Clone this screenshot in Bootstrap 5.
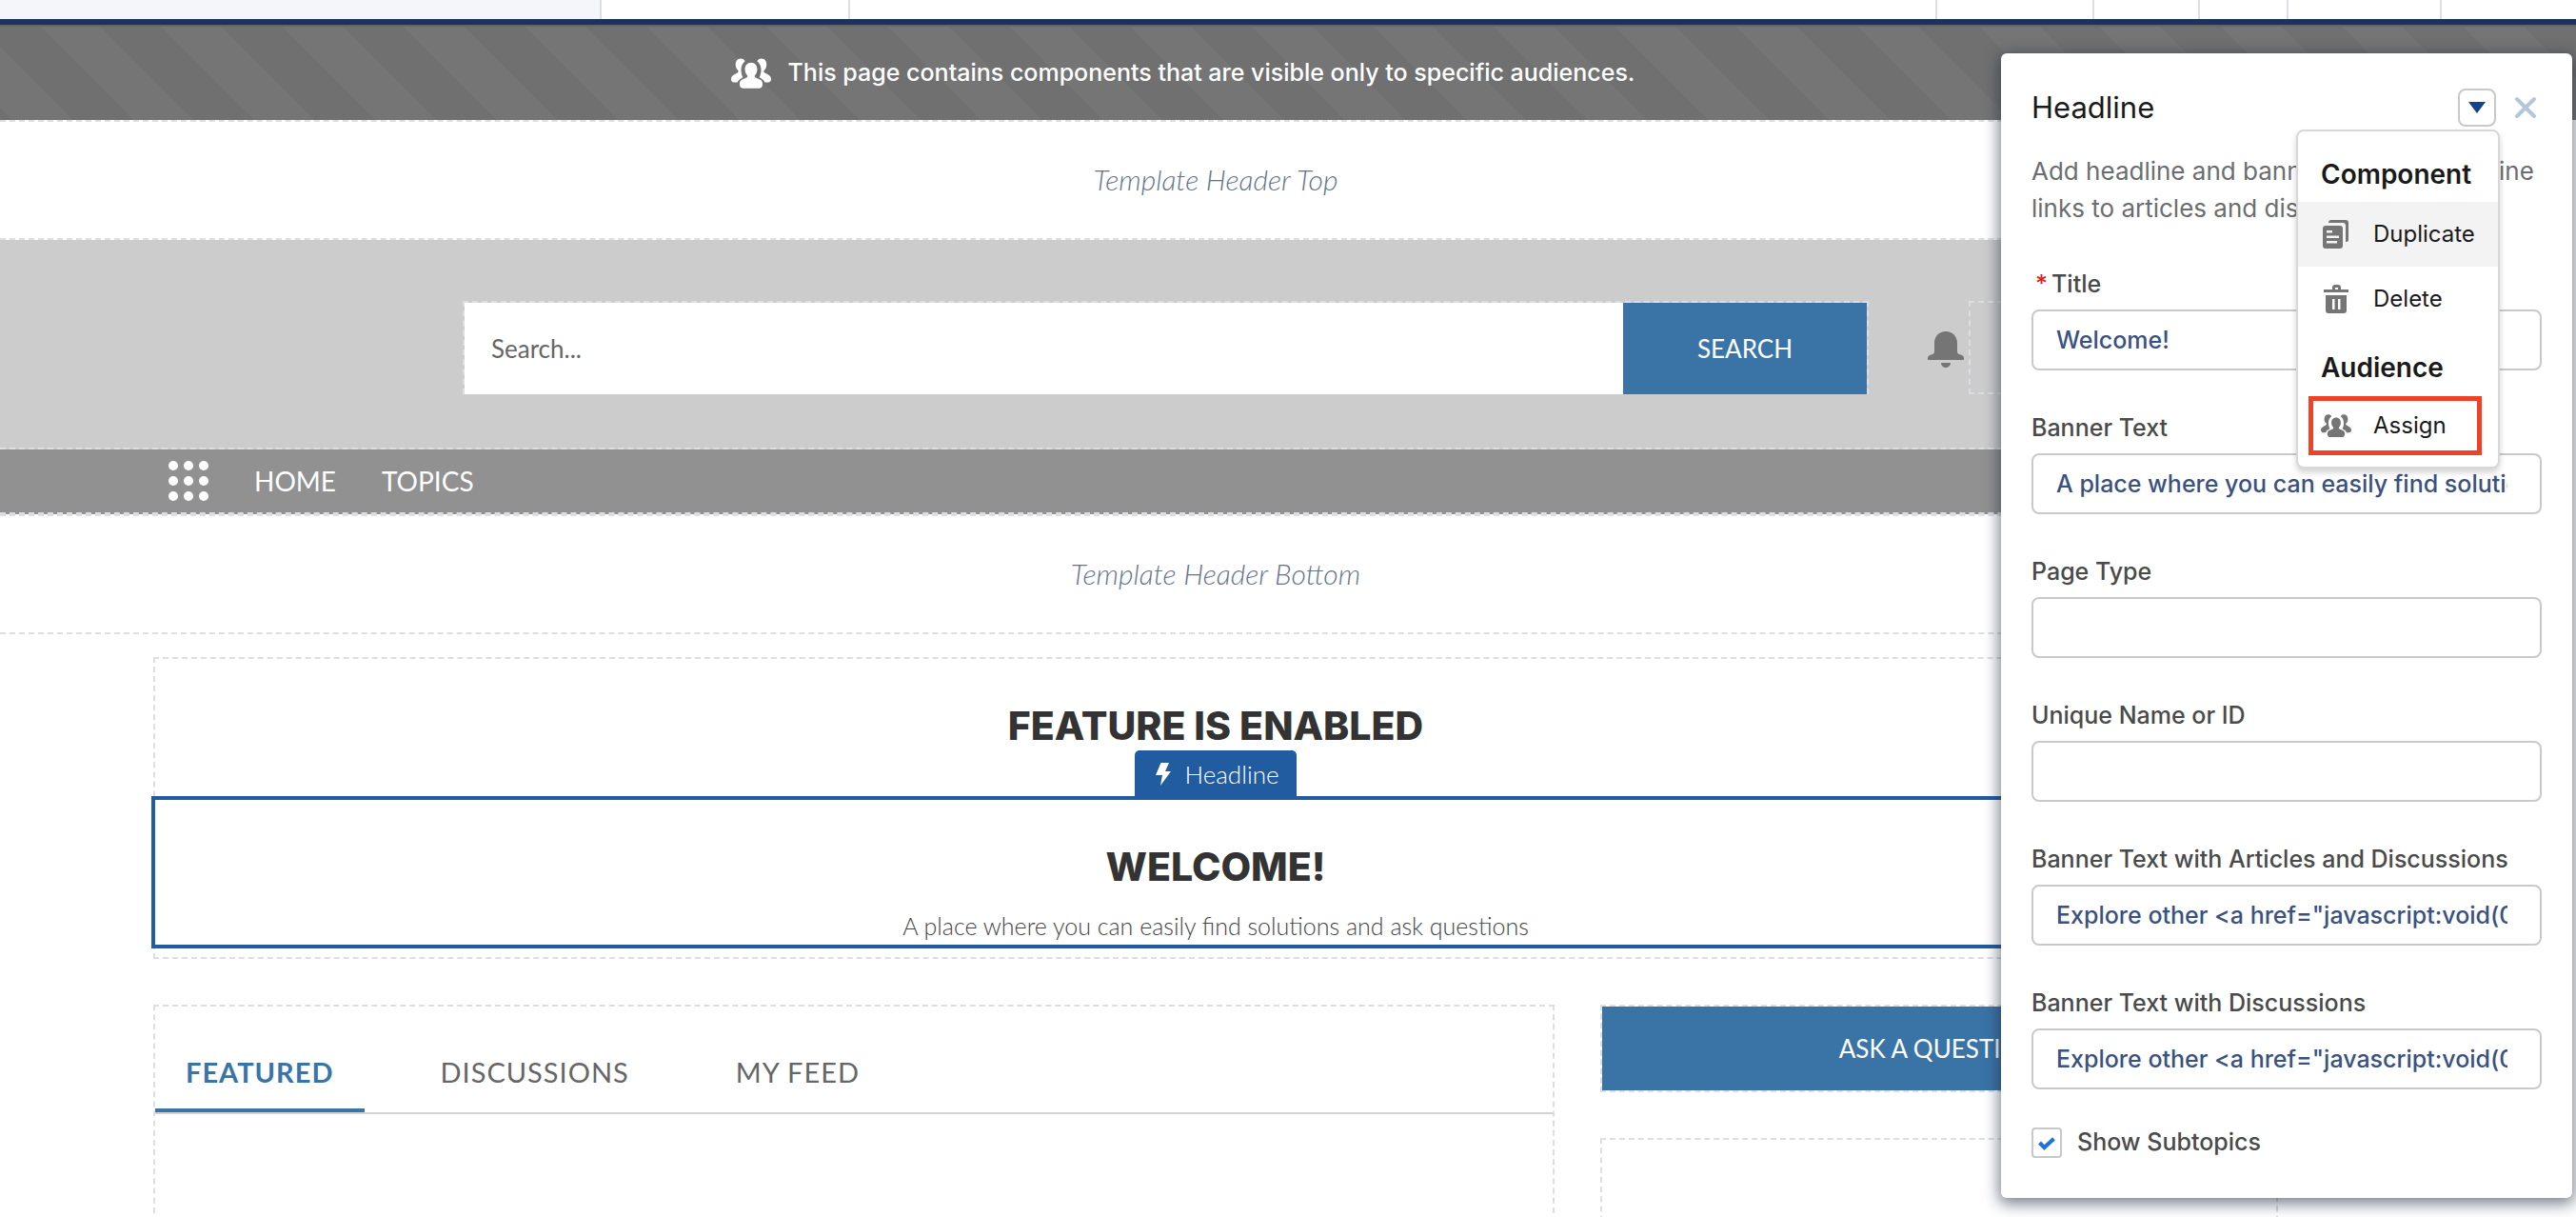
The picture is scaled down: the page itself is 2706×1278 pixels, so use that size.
<!DOCTYPE html>
<html lang="en">
<head>
<meta charset="utf-8">
<meta name="viewport" content="width=device-width, initial-scale=1">
<title>Experience Builder</title>
<link href="https://cdn.jsdelivr.net/npm/bootstrap@5.3.0/dist/css/bootstrap.min.css" rel="stylesheet">
<style>
:root { --dash: 2px dashed #dcdee3; --brand: #3a74a7; --select: #215ca0; }
body { font-family: Inter, "Liberation Sans", sans-serif; font-size: 25px; color: #1a1a1a; background: #fff; }
.builder { height: 100vh; overflow: hidden; }
.site { font-family: Lato, "Open Sans", sans-serif; }

/* Builder toolbar */
.builder-bar { height: 26px; border-bottom: 6px solid #1b335c; }
.builder-bar .slot { border-left: 2px solid #dddee6; }
.slot-brand { width: 630px; background: #f4f6fa; }
.slot-page { width: 261px; }
.slot-a { width: 165px; } .slot-b { width: 111px; } .slot-c { width: 93px; } .slot-d { width: 161px; } .slot-e { width: 143px; }

/* Audience notice */
.notice { height: 100px; padding-right: 221px; gap: 18px; color: #fff; font-weight: 500; border-top: 2px solid #666;
  background: repeating-linear-gradient(45deg, #707070 0 9px, #757575 9px 54px, #707070 54px 90px); }

/* Page canvas */
.canvas-area { padding-right: 152px; }
.zone { height: 126px; padding-bottom: 2px; border-top: var(--dash); border-bottom: var(--dash); }
.zone-label { font-size: 30px; font-weight: 300; font-style: italic; color: #66738c; }
.hero-band { height: 220px; padding: 64px 0 56px 486px; border-bottom: var(--dash); background: #ccc; }
.search-box { width: 1477px; border: var(--dash); border-bottom: 0; }
.search-box input { border: 0; border-radius: 0; padding: 0 28px; font-size: 26px; color: #666; background: #fff; }
.search-box input::placeholder { color: #666; opacity: 1; }
.btn-brand { border-radius: 0; background: var(--brand); color: #fff; font-size: 26px; line-height: 32px; }
.btn-search { width: 256px; }
.bell { margin: 4px 0 0 62px; }
.profile-slot { width: 300px; height: 98px; margin-left: 5px; border: var(--dash); }
.site-nav { height: 68px; padding-left: 177px; background: #919191; border-bottom: var(--dash); }
.site-nav a { color: #fff; font-size: 28px; text-decoration: none; }
.site-main { padding: 24px 161px 0; }
.region { border: var(--dash); }
.page-title { margin: 0; font-family: Inter, "Open Sans", sans-serif; font-size: 41px; line-height: 48px; font-weight: 800; color: #333; }
.selected { margin: 0 -4px 9px; border: 4px solid var(--select); padding: 46px 0 0; height: 160px; }
.selected p { font-size: 25px; font-weight: 300; line-height: 32px; color: #444; margin: 22px 0 0; }
.select-tag { bottom: 100%; left: 50%; transform: translateX(-50%); width: 170px; height: 52px; padding: 0 0 2px 4px; gap: 14px; background: var(--select); color: #fff; font-size: 26px; font-weight: 300; border-radius: 5px 5px 0 0; }
.feature-row { height: 144px; padding-top: 46px; }
.content-row { --bs-gutter-x: 48px; padding-top: 48px; }
.feed { height: 300px; }
.feed-tabs { height: 113px; gap: 48px; border-bottom: 2px solid #d3d3d3; font-size: 29px; }
.feed-tabs .nav-link { padding: 0 32px 20px; line-height: 36px; letter-spacing: 1px; color: #666; border-bottom: 4px solid transparent; border-radius: 0; }
.feed-tabs .nav-link.active { color: var(--brand); font-weight: 700; border-color: var(--brand); }
.ask { border: var(--dash); margin-bottom: 48px; }
.ask button { height: 88px; }
.side-slot { height: 200px; }

/* Property panel */
.prop-panel { top: 56px; right: 4px; width: 600px; padding: 32px 32px 42px; background: #fff; border-radius: 6px; box-shadow: 0 4px 16px 2px rgba(30,40,60,.6); }
.panel-head { height: 50px; }
.panel-head h2 { margin: 0; font-size: 31px; line-height: 50px; font-weight: 400; }
.menu-toggle { width: 40px; height: 40px; padding: 0; margin-right: 18px; border: 2px solid #c9c9c9; border-radius: 8px; background: #fff; line-height: 0; }
.close-btn { padding: 0; border: 0; background: none; line-height: 0; }
.panel-note { margin: 22px 0 0; width: 536px; font-size: 26px; line-height: 39px; color: #6b6d70; }
.field { margin-top: 44px; }
.field label { display: block; line-height: 32px; margin-bottom: 11px; }
.field label, .check-row label { font-weight: 500; color: #4a4a4a; }
.field .form-control { height: 64px; padding: 0 34px 0 24px; font-size: 25px; font-weight: 500; color: #3b5180; border: 2px solid #c9c9c9; border-radius: 8px; }
.req { color: #e02020; padding: 0 4px; }
.check-row { height: 32px; margin-top: 40px; gap: 16px; }
.check-row .form-check-input { width: 32px; height: 32px; margin: 0; border: 2px solid #c9c9c9; border-radius: 4px; background-size: 20px;
  background-color: #fff; background-image: url("data:image/svg+xml,%3csvg xmlns='http://www.w3.org/2000/svg' viewBox='0 0 24 24'%3e%3cpath fill='none' stroke='%231f74d8' stroke-width='5' d='M3 12l6 6L21 7'/%3e%3c/svg%3e"); }
.action-menu { display: block; z-index: 5; top: 80px; right: 76px; left: auto; min-width: 0; width: 214px; height: 356px; padding: 20px 0 0; border: 2px solid #d8d8d8; border-radius: 8px; background: #fff; box-shadow: 0 4px 6px rgba(0,0,0,.18); }
.action-menu .dropdown-header { padding: 0 24px 4px; font-size: 28px; line-height: 50px; font-weight: 600; color: #1a1a1a; }
.action-menu .dropdown-item + .dropdown-header { padding-top: 13px; }
.action-menu .dropdown-item { height: 68px; padding: 0 24px; gap: 23px; font-size: 24px; color: #1a1a1a; }
.action-menu .dropdown-item.hot { background: #f3f3f3; }
.action-menu .dropdown-item.target { height: 62px; width: 182px; margin: 1px 0 0 11px; padding: 0 8px; border: 5px solid #ee4126; }
</style>
</head>
<body>
<svg class="d-none" aria-hidden="true">
  <symbol id="people" viewBox="0 0 32 24">
    <path d="M16 3.500c3.200 0 4.900 2.400 4.900 5.400 0 2-.8 3.600-1.800 4.700-.5.600-.3 1.500.5 1.900l3.400 1.500c1.500.7 2.200 1.900 2.200 3.600 0 1.900-1 3.400-2.500 3.400H9.300c-1.500 0-2.500-1.500-2.500-3.400 0-1.700.7-2.900 2.200-3.600l3.400-1.500c.8-.4 1-1.300.5-1.900-1-1.100-1.800-2.700-1.800-4.700 0-3 1.700-5.400 4.900-5.400z"/>
    <path d="M11.200 2.200C10.400.8 9.200.2 7.800.2 5 .2 3.600 2.300 3.600 5c0 1.900.8 3.600 1.900 4.600.6.600.4 1.600-.4 2l-2.600 1.400C1 13.800 0 15 0 16.800c0 1.600 1 2.400 2.300 2.400H5c.7-1.700 2-2.800 4.400-4C8.300 13.300 8 11 8 9c0-3 1.200-5.300 3.200-6.800z"/>
    <path d="M20.800 2.200c.8-1.400 2-2 3.400-2 2.800 0 4.200 2.100 4.200 4.800 0 1.900-.8 3.600-1.900 4.600-.6.600-.4 1.600.4 2l2.600 1.400c1.500.8 2.500 2 2.500 3.800 0 1.600-1 2.400-2.300 2.400H27c-.7-1.700-2-2.800-4.400-4 1.100-1.900 1.400-4.200 1.400-6.200 0-3-1.200-5.300-3.200-6.800z"/>
  </symbol>
</svg>

<div class="builder position-relative">
<header class="builder-bar d-flex">
  <div class="slot-brand"></div>
  <div class="slot slot-page"></div>
  <div class="slot flex-grow-1"></div>
  <div class="slot slot-a"></div><div class="slot slot-b"></div><div class="slot slot-c"></div><div class="slot slot-d"></div><div class="slot slot-e"></div>
</header>

<div class="notice d-flex align-items-center justify-content-center" role="status">
  <svg width="42" height="32" fill="#fff"><use href="#people"/></svg>
  <span>This page contains components that are visible only to specific audiences.</span>
</div>

<div class="site">
  <div class="canvas-area">
    <div class="zone d-flex align-items-center justify-content-center"><span class="zone-label">Template Header Top</span></div>
    <div class="hero-band d-flex align-items-stretch">
      <form class="search-box d-flex">
        <input class="form-control" type="search" placeholder="Search..." aria-label="Search">
        <button class="btn btn-brand btn-search flex-shrink-0" type="button">SEARCH</button>
      </form>
      <svg class="bell flex-shrink-0 align-self-center" width="38" height="38" viewBox="0 0 38 38" fill="#757575"><path d="M19 0C12 0 7 5.500 7 12v9c0 2-1 3-3.500 3.500C1.500 25 0 26 0 28v2h38v-2c0-2-1.500-3-3.500-3.500C32 24 31 23 31 21v-9C31 5.500 26 0 19 0zM14 33h10c0 2.500-2 5-5 5s-5-2.500-5-5z"/></svg>
      <div class="profile-slot flex-shrink-0"></div>
    </div>
    <nav class="site-nav d-flex align-items-center">
      <svg width="42" height="42" viewBox="0 0 42 42" fill="#fff" class="me-5"><circle cx="5" cy="5" r="5"/><circle cx="21" cy="5" r="5"/><circle cx="37" cy="5" r="5"/><circle cx="5" cy="21" r="5"/><circle cx="21" cy="21" r="5"/><circle cx="37" cy="21" r="5"/><circle cx="5" cy="37" r="5"/><circle cx="21" cy="37" r="5"/><circle cx="37" cy="37" r="5"/></svg>
      <a class="me-5" href="#">HOME</a>
      <a href="#">TOPICS</a>
    </nav>
    <div class="zone d-flex align-items-center justify-content-center"><span class="zone-label">Template Header Bottom</span></div>

    <main class="site-main">
      <section class="region text-center">
        <div class="feature-row"><h1 class="page-title">FEATURE IS ENABLED</h1></div>
        <div class="selected position-relative">
          <div class="select-tag position-absolute d-flex align-items-center justify-content-center">
            <svg width="16" height="24" viewBox="0 0 16 24" fill="#fff"><path d="M5.500 0H14L10 9h6L5 24l2-11H0z"/></svg>
            <span>Headline</span>
          </div>
          <h2 class="page-title">WELCOME!</h2>
          <p>A place where you can easily find solutions and ask questions</p>
        </div>
      </section>
      <div class="row content-row">
        <div class="col-8">
          <section class="region feed">
            <nav class="nav feed-tabs align-items-end">
              <a class="nav-link active" href="#">FEATURED</a>
              <a class="nav-link" href="#">DISCUSSIONS</a>
              <a class="nav-link" href="#">MY FEED</a>
            </nav>
          </section>
        </div>
        <div class="col-4">
          <div class="ask"><button class="btn btn-brand w-100" type="button">ASK A QUESTION</button></div>
          <div class="region side-slot"></div>
        </div>
      </div>
    </main>
  </div>
</div>

<aside class="prop-panel position-absolute">
  <div class="panel-head d-flex align-items-center">
    <h2 class="me-auto">Headline</h2>
    <button class="menu-toggle" type="button" aria-label="Component actions"><svg width="18" height="12" viewBox="0 0 18 12" fill="#14438a"><path d="M0 0h18L9 12z"/></svg></button>
    <button class="close-btn me-1" type="button" aria-label="Close"><svg width="26" height="26" viewBox="0 0 26 26" fill="none" stroke="#b4c6de" stroke-width="4" stroke-linecap="round"><path d="M4 4l18 18M22 4L4 22"/></svg></button>
  </div>
  <p class="panel-note">Add headline and banner text, or add inline links to articles and discussions.</p>
  <form>
    <div class="field"><label for="f1"><span class="req">*</span>Title</label><input id="f1" class="form-control" type="text" value="Welcome!"></div>
    <div class="field"><label for="f2">Banner Text</label><input id="f2" class="form-control" type="text" value="A place where you can easily find solutions and ask questions"></div>
    <div class="field"><label for="f3">Page Type</label><input id="f3" class="form-control" type="text"></div>
    <div class="field"><label for="f4">Unique Name or ID</label><input id="f4" class="form-control" type="text"></div>
    <div class="field"><label for="f5">Banner Text with Articles and Discussions</label><input id="f5" class="form-control" type="text" value="Explore other &lt;a href=&quot;javascript:void(0)&quot;&gt;articles&lt;/a&gt;"></div>
    <div class="field"><label for="f6">Banner Text with Discussions</label><input id="f6" class="form-control" type="text" value="Explore other &lt;a href=&quot;javascript:void(0)&quot;&gt;discussions&lt;/a&gt;"></div>
    <div class="check-row d-flex align-items-center"><input id="f7" class="form-check-input" type="checkbox" checked><label for="f7">Show Subtopics</label></div>
  </form>
  <div class="dropdown-menu action-menu">
    <h3 class="dropdown-header">Component</h3>
    <button class="dropdown-item hot d-flex align-items-center" type="button">
      <svg width="32" height="32" viewBox="0 0 32 32" fill="#757575"><path d="M10 1h16a3 3 0 0 1 3 3v18a2 2 0 0 1-2 2h-1V7a3 3 0 0 0-3-3H8a3 3 0 0 1 2-3z"/><path fill-rule="evenodd" d="M5 7h15a3 3 0 0 1 3 3v18a3 3 0 0 1-3 3H5a3 3 0 0 1-3-3V10a3 3 0 0 1 3-3zm1 5v2.500h6V12zm0 5.500V20h13v-2.500zM6 23v2.500h11V23z"/></svg>
      Duplicate</button>
    <button class="dropdown-item d-flex align-items-center" type="button">
      <svg width="32" height="32" viewBox="0 0 32 32" fill="#757575"><path fill-rule="evenodd" d="M3 6h9V4a3 3 0 0 1 3-3h3a3 3 0 0 1 3 3v2h8v3H3zm12 0h3V4h-3zM5 12h22v16a3 3 0 0 1-3 3H8a3 3 0 0 1-3-3zm7 4v11h2.500V16zm6 0v11h2.500V16z"/></svg>
      Delete</button>
    <h3 class="dropdown-header">Audience</h3>
    <button class="dropdown-item target d-flex align-items-center" type="button">
      <svg width="32" height="24" fill="#757575"><use href="#people"/></svg>
      Assign</button>
  </div>
</aside>
</div>
<script src="https://cdn.jsdelivr.net/npm/bootstrap@5.3.0/dist/js/bootstrap.bundle.min.js"></script>
</body>
</html>
